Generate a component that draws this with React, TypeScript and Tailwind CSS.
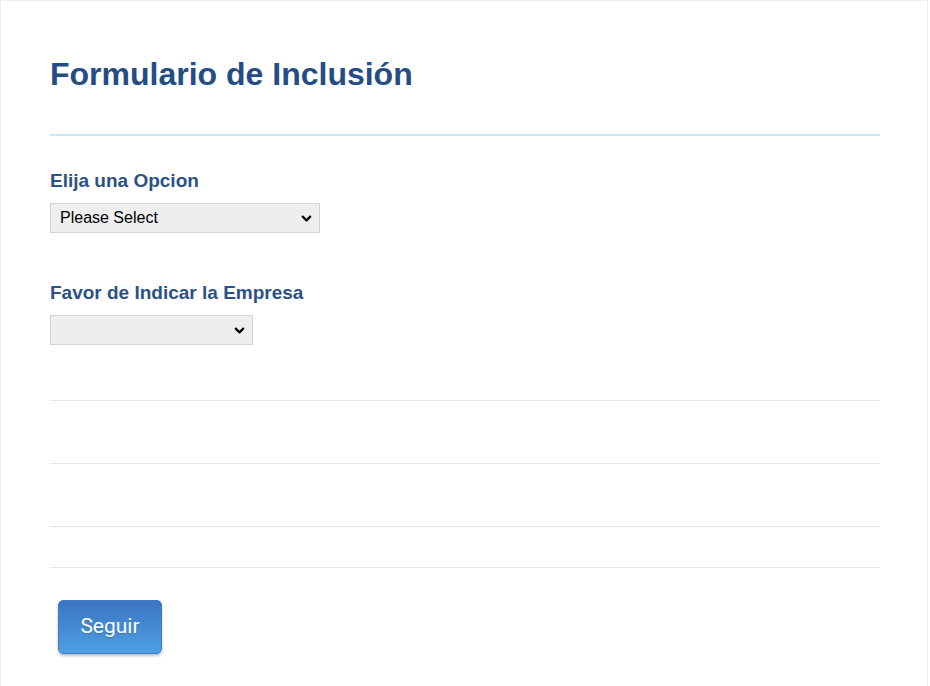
import { ChevronDown } from "lucide-react";

const labelCls =
  "block text-[19px] leading-[20px] font-bold text-[#2c5186] [font-family:'Liberation_Sans',Arial,sans-serif]";

function SelectBox({ width, placeholder }: { width: string; placeholder?: string }) {
  return (
    <div className={`relative ${width} h-[30px]`}>
      <select
        defaultValue=""
        className="appearance-none w-full h-full bg-[#eeeeee] border border-[#d3d3d3] pl-[9px] text-[16px] text-black [font-family:'Liberation_Sans',Arial,sans-serif] outline-none"
      >
        <option value="">{placeholder ?? ""}</option>
      </select>
      <ChevronDown
        size={15}
        strokeWidth={3.5}
        className="absolute right-[6px] top-[8px] text-black pointer-events-none"
      />
    </div>
  );
}

export default function App() {
  return (
    <div className="w-[928px] h-[686px] bg-white border-x border-t border-[#eeeeee] [font-family:'Liberation_Sans',Arial,sans-serif]">
      <div className="pl-[49px] pr-[47px]">
        <div className="pt-[55px] pb-[42px]">
          <h1 className="text-[32px] leading-[36px] font-bold text-[#234d84]">
            Formulario de Inclusión
          </h1>
        </div>
        <div className="h-[2px] bg-[#c9e9f1]" />

        <div className="pt-[35px] pb-[50px]">
          <label className={labelCls}>Elija una Opcion</label>
          <div className="mt-[12px]">
            <SelectBox width="w-[270px]" placeholder="Please Select" />
          </div>
        </div>

        <div className="pb-[55px]">
          <label className={labelCls}>Favor de Indicar la Empresa</label>
          <div className="mt-[12px]">
            <SelectBox width="w-[203px]" />
          </div>
        </div>

        <div className="border-t border-[#e6e6e6] h-[63px]" />
        <div className="border-t border-[#e6e6e6] h-[63px]" />
        <div className="border-t border-[#e6e6e6] h-[41px]" />
        <div className="border-t border-[#e6e6e6] pt-[32px] pl-[8px]">
          <button className="w-[104px] h-[54px] rounded-[5px] bg-gradient-to-b from-[#3a75c2] to-[#4f9fe2] border border-[#3f7cc5] text-white text-[21px] [font-family:Roboto,sans-serif] shadow-[0_2px_3px_rgba(0,0,0,0.25)] [text-shadow:0_1px_1px_rgba(0,0,0,0.2)]">
            Seguir
          </button>
        </div>
      </div>
    </div>
  );
}
